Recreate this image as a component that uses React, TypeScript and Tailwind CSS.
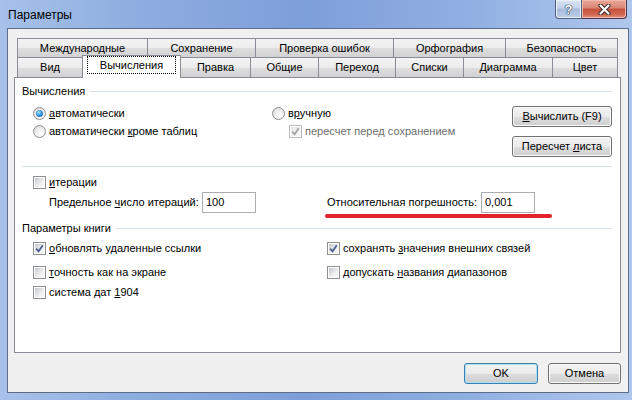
import React from 'react';

const tabGrad =
  'bg-[linear-gradient(to_bottom,#f3f3f3_0%,#ececec_50%,#dedede_51%,#d2d2d2_100%)]';
const btnGrad =
  'bg-[linear-gradient(to_bottom,#f2f2f2_0%,#ebebeb_50%,#dddddd_51%,#cfcfcf_100%)]';

function Radio({ checked = false }: { checked?: boolean }) {
  return (
    <span className="flex h-[13px] w-[13px] shrink-0 items-center justify-center rounded-full border border-[#8f8f8f] bg-[radial-gradient(circle_at_65%_70%,#ffffff_0%,#ebebeb_55%,#cfcfcf_100%)]">
      {checked && (
        <span className="h-[7px] w-[7px] rounded-full bg-[radial-gradient(circle_at_40%_35%,#a8e4fc_0%,#2f8fd9_50%,#1a56a0_100%)]" />
      )}
    </span>
  );
}

function Check({ checked = false, disabled = false }: { checked?: boolean; disabled?: boolean }) {
  return (
    <span
      className={`flex h-[13px] w-[13px] shrink-0 items-center justify-center border bg-white p-px ${
        disabled ? 'border-[#bcbcbc]' : 'border-[#8e8f8f]'
      }`}
    >
      <span
        className={`flex h-full w-full items-center justify-center ${
          disabled
            ? 'bg-[linear-gradient(135deg,#e6e6e6_0%,#fafafa_100%)]'
            : 'bg-[linear-gradient(135deg,#c4c8cd_0%,#eeeeee_60%,#fafafa_100%)]'
        }`}
      >
        {checked && (
          <svg width="9" height="9" viewBox="0 0 9 9">
            <path
              d="M1.2 4.6 L3.6 7.3 L7.8 1.2"
              fill="none"
              stroke={disabled ? '#a3a3a3' : '#4b5f8e'}
              strokeWidth="1.7"
            />
          </svg>
        )}
      </span>
    </span>
  );
}

function Btn({ children, isDefault = false, w = 'w-[100px]' }: { children: React.ReactNode; isDefault?: boolean; w?: string }) {
  return (
    <div
      className={`flex h-[21px] ${w} items-center justify-center rounded-[3px] border ${btnGrad} ${
        isDefault
          ? 'border-[#3c7fb1] shadow-[inset_0_0_0_1px_#a9e1f8]'
          : 'border-[#707070] shadow-[inset_0_0_0_1px_#fbfbfb]'
      }`}
    >
      {children}
    </div>
  );
}

function Field({ value }: { value: string }) {
  return (
    <div className="flex h-[21px] w-[54px] items-center border border-[#abadb3] bg-white px-[3px]">{value}</div>
  );
}

function Heading({ children, mt }: { children: React.ReactNode; mt: string }) {
  return (
    <div className={`${mt} flex h-[13px] items-center pl-[7px] pr-[8px]`}>
      <span>{children}</span>
      <span className="ml-[5px] h-px flex-1 bg-[#d5dfe5]" />
    </div>
  );
}

const U = ({ children }: { children: React.ReactNode }) => <span className="underline">{children}</span>;

const topTabs = [
  { name: 'Международные', w: 'w-[131px]' },
  { name: 'Сохранение', w: 'w-[109px]' },
  { name: 'Проверка ошибок', w: 'w-[139px]' },
  { name: 'Орфография', w: 'w-[113px]' },
  { name: 'Безопасность', w: 'w-[113px]' },
];

const bottomTabs = [
  { name: 'Вид', w: 'w-[66px]' },
  { name: 'Вычисления', w: 'w-[99px]', active: true },
  { name: 'Правка', w: 'w-[71px]' },
  { name: 'Общие', w: 'w-[69px]' },
  { name: 'Переход', w: 'w-[78px]' },
  { name: 'Списки', w: 'w-[69px]' },
  { name: 'Диаграмма', w: 'w-[90px]' },
  { name: 'Цвет', w: 'w-[66px]' },
];

export default function App() {
  return (
    <div className="h-[400px] w-[632px] overflow-hidden bg-[linear-gradient(to_right,#a7c1e9_0%,#8dade0_22%,#7d9fd9_48%,#90afe2_74%,#afc7ed_100%)] font-['Liberation_Sans',Arial,sans-serif] text-[11px] leading-[13px] text-black">
      {/* Title bar */}
      <div className="flex h-[28px] items-start justify-between">
        <span className="pl-[8px] pt-[8px] text-[12px] leading-[15px]">Параметры</span>
        <div className="mr-[5px] flex">
          <div className="flex h-[19px] w-[27px] items-center justify-center rounded-bl-[4px] border border-t-0 border-[#51607c] bg-[linear-gradient(to_bottom,#dbe5f3_0%,#c3d3ea_45%,#a7bcdb_50%,#bccde6_100%)] shadow-[inset_0_0_0_1px_#e9f0fa]">
            <span className="text-[13px] font-bold leading-[13px] text-white [text-shadow:0_0_1px_#1d2b45,0_0_1px_#1d2b45,0_0_1px_#1d2b45]">?</span>
          </div>
          <div className="flex h-[19px] w-[45px] items-center justify-center rounded-br-[4px] border border-l-0 border-t-0 border-[#51354a] bg-[linear-gradient(to_bottom,#eaa898_0%,#d98472_45%,#c6503b_50%,#d26650_80%,#e39a82_100%)] shadow-[inset_0_0_0_1px_#f0b9ab]">
            <svg width="13" height="11" viewBox="0 0 13 11">
              <path d="M2.5 1.5 L10.5 9.5 M10.5 1.5 L2.5 9.5" stroke="#3c2a2a" strokeWidth="4.2" strokeLinecap="round" />
              <path d="M2.5 1.5 L10.5 9.5 M10.5 1.5 L2.5 9.5" stroke="#ffffff" strokeWidth="2.2" strokeLinecap="round" />
            </svg>
          </div>
        </div>
      </div>

      {/* Client area */}
      <div className="ml-[7px] flex h-[365px] w-[622px] flex-col border border-[#5d6d87] bg-[#f0f0f0] pl-[6px] pt-[9px]">
        {/* Tabs */}
        <div className="ml-[3px] flex h-[19px]">
          {topTabs.map((t, i) => (
            <div
              key={t.name}
              className={`${t.w} ${i > 0 ? '-ml-px' : ''} flex items-center justify-center border border-b-0 border-[#898c95] ${tabGrad}`}
            >
              {t.name}
            </div>
          ))}
        </div>
        <div className="ml-[3px] flex h-[20px] items-end">
          {bottomTabs.map((t, i) =>
            t.active ? (
              <div
                key={t.name}
                className={`${t.w} relative z-10 -mb-px -ml-px flex h-[23px] border border-b-0 border-[#898c95] bg-white px-[4px] pb-[4px]`}
              >
                <span className="flex flex-1 items-center justify-center border border-dotted border-black">{t.name}</span>
              </div>
            ) : (
              <div
                key={t.name}
                className={`${t.w} ${i > 0 ? '-ml-px' : ''} flex h-[20px] items-center justify-center border border-b-0 border-[#898c95] ${tabGrad}`}
              >
                {t.name}
              </div>
            )
          )}
        </div>

        {/* Panel */}
        <div className="flex h-[276px] w-[607px] flex-col border border-[#898c95] bg-white">
          <Heading mt="mt-[7px]">Вычисления</Heading>

          <div className="mt-[6px] flex pl-[18px]">
            <div className="w-[239px]">
              <div className="flex h-[18px] items-center gap-[3px]">
                <Radio checked />
                <span>
                  <U>а</U>втоматически
                </span>
              </div>
              <div className="flex h-[18px] items-center gap-[3px]">
                <Radio />
                <span>
                  автоматически <U>к</U>роме таблиц
                </span>
              </div>
            </div>
            <div className="w-[240px]">
              <div className="flex h-[18px] items-center gap-[3px]">
                <Radio />
                <span>
                  в<U>р</U>учную
                </span>
              </div>
              <div className="flex h-[18px] items-center gap-[3px] pl-[17px]">
                <Check checked disabled />
                <span className="text-[#6d6d6d]">пересчет перед сохранением</span>
              </div>
            </div>
            <div className="flex flex-col gap-[9px] pt-[2px]">
              <Btn>
                <span>
                  <U>В</U>ычислить (F9)
                </span>
              </Btn>
              <Btn>
                <span>
                  Пересчет <U>л</U>иста
                </span>
              </Btn>
            </div>
          </div>

          <div className="ml-[7px] mr-[8px] mt-[9px] h-px bg-[#d5dfe5]" />

          <div className="mt-[6px] flex h-[18px] items-center gap-[3px] pl-[18px]">
            <Check />
            <span>
              <U>и</U>терации
            </span>
          </div>
          <div className="relative mt-px flex h-[21px] items-center pl-[34px]">
            <span className="w-[153px]">
              Предельное <U>ч</U>исло итераций:
            </span>
            <Field value="100" />
            <span className="w-[71px]" />
            <span className="w-[154px]">Относительная погрешность:</span>
            <Field value="0,001" />
            <span className="absolute left-[310px] top-[22px] h-[4px] w-[227px] rounded-full bg-[#e3232b]" />
          </div>

          <Heading mt="mt-[9px]">Параметры книги</Heading>

          <div className="mt-[4px] flex h-[18px] items-center pl-[18px]">
            <div className="flex w-[294px] items-center gap-[3px]">
              <Check checked />
              <span>
                <U>о</U>бновлять удаленные ссылки
              </span>
            </div>
            <div className="flex items-center gap-[3px]">
              <Check checked />
              <span>
                сохранять <U>з</U>начения внешних связей
              </span>
            </div>
          </div>
          <div className="mt-[6px] flex h-[18px] items-center pl-[18px]">
            <div className="flex w-[294px] items-center gap-[3px]">
              <Check />
              <span>
                <U>т</U>очность как на экране
              </span>
            </div>
            <div className="flex items-center gap-[3px]">
              <Check />
              <span>
                допускать <U>н</U>азвания диапазонов
              </span>
            </div>
          </div>
          <div className="mt-[2px] flex h-[18px] items-center pl-[18px]">
            <div className="flex w-[294px] items-center gap-[3px]">
              <Check />
              <span>
                система дат <U>1</U>904
              </span>
            </div>
          </div>
        </div>

        {/* Dialog buttons */}
        <div className="mt-[10px] flex justify-end gap-[10px] pr-[7px]">
          <Btn isDefault w="w-[74px]">
            OK
          </Btn>
          <Btn w="w-[73px]">Отмена</Btn>
        </div>
      </div>
    </div>
  );
}
